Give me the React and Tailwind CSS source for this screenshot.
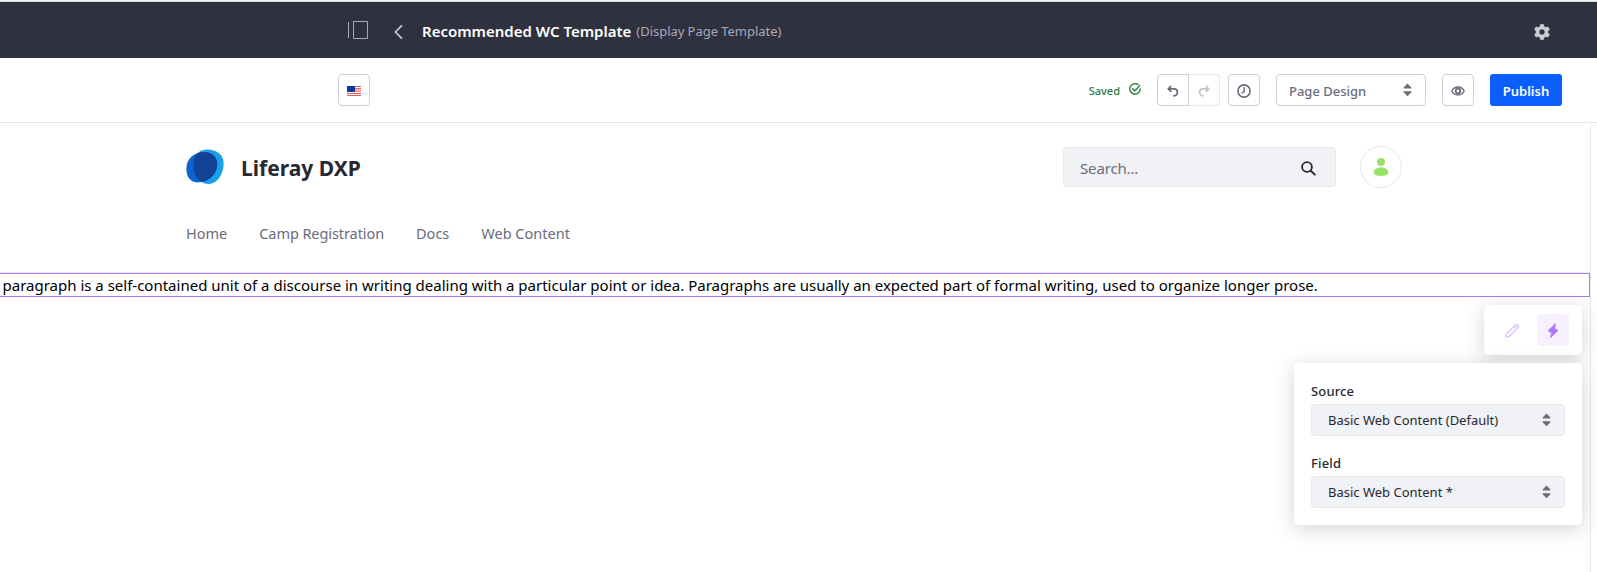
function Carets() {
  return (
    <svg width="9" height="14" viewBox="0 0 9 14" fill="#6b6c7e" className="shrink-0">
      <path d="M4.5.6 8.3 4.6Q8.7 5.6 7.8 5.6H1.2Q.3 5.6.7 4.6Z" />
      <path d="M4.5 13.2 8.3 9.2Q8.7 8.2 7.8 8.2H1.2Q.3 8.2.7 9.2Z" />
    </svg>
  );
}

function UndoIcon({ flip }) {
  return (
    <svg width="12" height="12" viewBox="0 0 12 12" fill="none" className={flip ? "mt-px -scale-x-100" : "mt-px"}>
      <path d="M1.6 3.8H7.2C11.6 4 11.6 10.2 6.9 10.8" stroke="currentColor" strokeWidth="1.7" strokeLinecap="round" />
      <path d="M3.8 1.4 1.3 3.8 3.8 6.3" stroke="currentColor" strokeWidth="1.7" strokeLinecap="round" strokeLinejoin="round" />
    </svg>
  );
}

function Logo() {
  const front =
    "M20.5.4C30.5.1 37.6 5.6 37.6 14.2C37.6 25 31.5 35 22 35C13 34.5 7.3 26 7.3 16C7.3 7 12 .8 20.5.4Z";
  const back =
    "M18.5 3C26 3 31.2 8 31.2 15C31.2 25 22.5 33.4 11.2 33.4C4 33.4.4 27.6.4 19.6C.4 9.8 8 3 18.5 3Z";
  return (
    <svg width="38" height="36" viewBox="0 0 38 36">
      <clipPath id="logo-front">
        <path d={front} />
      </clipPath>
      <path d={front} fill="#1a9fe9" />
      <path d={back} fill="#0b63ce" />
      <path d={back} fill="#134194" clipPath="url(#logo-front)" />
    </svg>
  );
}

function Flag() {
  return (
    <svg width="14" height="10" viewBox="0 0 14 10" shapeRendering="crispEdges">
      <rect width="14" height="10" fill="#fff" />
      <rect width="14" height="1" fill="#e4595c" />
      <rect y="2" width="14" height="1" fill="#e4696c" />
      <rect x="8" y="3" width="6" height="2" fill="#f3b3b5" />
      <rect y="5" width="14" height="1" fill="#eb8a8c" />
      <rect y="7" width="14" height="1" fill="#e4595c" />
      <rect y="9" width="14" height="1" fill="#e4595c" />
      <rect width="8" height="6" fill="#0b3a9e" />
    </svg>
  );
}

function Field({ label, value }) {
  return (
    <div className="flex flex-col gap-[3px]">
      <span className="h-[21px] pt-px text-[13px] leading-[21px] font-medium tracking-[0.15px] text-[#272833]">{label}</span>
      <div className="flex h-8 items-center justify-between rounded border border-[#e7e7ed] bg-[#f1f2f5] pr-[13px] pl-4 text-[13px] text-[#272833]">
        <span className="pt-[2px]">{value}</span>
        <Carets />
      </div>
    </div>
  );
}

const iconButton = "flex h-8 items-center justify-center rounded border border-[#cdced9] text-[#6b6c7e]";

export default function App() {
  return (
    <div className="flex h-[572px] w-[1597px] flex-col overflow-hidden bg-white font-['Noto_Sans',sans-serif]">
      <header className="flex h-[58px] shrink-0 items-center border-t border-[#f4f5f7] bg-[#30313f] shadow-[inset_0_1px_0_#d5d7db] pl-[348px]">
        <svg width="20" height="18" viewBox="0 0 20 18" fill="none" stroke="#a7a9bc" className="mt-px">
          <path d="M.5 1V17M5.5.5H19.5V17.5H5.5Z" />
        </svg>
        <svg width="9" height="16" viewBox="0 0 9 16" fill="none" stroke="#cdced9" strokeWidth="1.6" className="mt-[5px] ml-[26px]">
          <path d="M8 1.4 1.4 8l6.6 6.6" />
        </svg>
        <h1 className="mt-[3px] ml-[19px] text-[15px] font-semibold whitespace-nowrap text-white">Recommended WC Template</h1>
        <span className="mt-[4px] ml-[5px] text-[13px] tracking-[-0.04px] whitespace-nowrap text-[#a7a9bc]">(Display Page Template)</span>
        <svg width="16" height="16" viewBox="0 0 16 16" className="mt-[5px] mr-[47px] ml-auto" fill="#cdced9">
          <path
            fillRule="evenodd"
            stroke="#cdced9"
            strokeWidth=".6"
            strokeLinejoin="round"
            d="M6.5.4H9.5L10.1 2.7 11.6 3.6 14 2.9 15.5 5.4 13.8 7.1V8.9L15.5 10.6 14 13.1 11.6 12.4 10.1 13.3 9.5 15.6H6.5L5.9 13.3 4.4 12.4 2 13.1.5 10.6 2.2 8.9V7.1L.5 5.4 2 2.9 4.4 3.6 5.9 2.7ZM8 5A3 3 0 1 0 8 11A3 3 0 1 0 8 5Z"
          />
        </svg>
      </header>

      <div className="flex h-[65px] shrink-0 items-center border-b border-[#e7e7ed] pr-[35px] pl-[338px]">
        <button className={`${iconButton} w-8 pt-[2px]`}>
          <Flag />
        </button>
        <span className="mt-[2px] ml-auto text-[11px] font-medium text-[#287d3c]">Saved</span>
        <svg width="12" height="12" viewBox="0 0 12 12" fill="none" stroke="#287d3c" strokeWidth="1.4" strokeLinecap="round" strokeLinejoin="round" className="mb-[3px] ml-[9px]">
          <path d="M9 1.6A5.2 5.2 0 1 0 11.2 6" />
          <path d="M3.6 5.8 5.7 8 10.6 2.6" />
        </svg>
        <div className="ml-[16px] flex">
          <button className="flex h-8 w-8 items-center justify-center rounded-l border border-[#cdced9] text-[#6b6c7e]">
            <UndoIcon />
          </button>
          <button className="flex h-8 w-[31px] items-center justify-center rounded-r border border-l-0 border-[#e9e9ef] text-[#c4c4cb]">
            <UndoIcon flip />
          </button>
        </div>
        <button className={`${iconButton} ml-[8px] w-8`}>
          <svg width="14" height="14" viewBox="0 0 14 14" fill="none" stroke="currentColor" className="mt-[2px]">
            <circle cx="7" cy="7" r="6.1" strokeWidth="1.6" />
            <path d="M7.2 3.6V7.4L5.2 9" strokeWidth="1.5" strokeLinecap="round" />
          </svg>
        </button>
        <div className={`${iconButton} ml-[16px] w-[150px] !justify-between pr-[13px] pl-3 text-[13px] font-medium`}>
          <span className="pt-[3px]">Page Design</span>
          <Carets />
        </div>
        <button className={`${iconButton} ml-[16px] w-8`}>
          <svg width="14" height="10" viewBox="0 0 14 10" fill="none" stroke="currentColor" className="mt-[2px]">
            <path d="M.8 5C3.6-.3 10.4-.3 13.2 5C10.4 10.3 3.6 10.3.8 5Z" strokeWidth="1.4" />
            <circle cx="7" cy="5" r="2.3" strokeWidth="1.8" />
          </svg>
        </button>
        <button className="ml-4 h-8 w-[72px] rounded-[3px] bg-[#0b5fff] pt-[3px] text-[13px] font-semibold text-white">Publish</button>
      </div>

      <main className="flex w-[1591px] grow flex-col border-r border-[#e7e7ed]">
        <div className="flex h-[88px] items-center pl-[186px]">
          <Logo />
          <span className="mt-[4px] ml-[17px] text-[21px] font-bold text-[#272833]">Liferay DXP</span>
          <div className="ml-auto flex h-10 w-[273px] items-center justify-between rounded border border-[#e7e7ed] bg-[#f1f2f5] pr-[19px] pl-[16px]">
            <span className="pt-[2px] text-[15px] tracking-[-0.15px] text-[#6b6c7e]">Search...</span>
            <svg width="15" height="15" viewBox="0 0 15 15" fill="none" stroke="#272833" strokeLinecap="round" className="mt-[2px]">
              <circle cx="6" cy="6" r="4.9" strokeWidth="1.8" />
              <path d="M9.8 9.8 13.8 13.6" strokeWidth="2" />
            </svg>
          </div>
          <div className="mr-[188px] ml-[24px] flex size-[42px] items-center justify-center rounded-full border border-[#e7e7ed]">
            <svg width="16" height="18" viewBox="0 0 16 18" fill="#9be169">
              <circle cx="8" cy="4.1" r="4" />
              <path d="M8 9.2C12.4 9.2 15.4 12 15.4 14.6C15.4 17 12 18 8 18C4 18 .6 17 .6 14.6C.6 12 3.6 9.2 8 9.2Z" />
            </svg>
          </div>
        </div>
        <nav className="flex h-[62px] items-center gap-[32px] border-b border-[#ebebef] pb-[15px] pl-[186px] text-[14.5px] text-[#6b6c7e]">
          <span>Home</span>
          <span className="tracking-[-0.08px]">Camp Registration</span>
          <span>Docs</span>
          <span>Web Content</span>
        </nav>
        <p className="flex h-6 items-center border-y border-r border-[#af78ff] pl-[2.5px] text-[15px] whitespace-nowrap text-black">
          paragraph is a self-contained unit of a discourse in writing dealing with a particular point or idea. Paragraphs are usually an expected part of formal writing, used to organize longer prose.
        </p>
        <div className="flex flex-col items-end gap-2 pt-2 pr-2">
          <div className="flex h-[50px] w-[98px] items-center justify-end gap-[17px] rounded bg-white pr-[13px] shadow-[0_4px_20px_rgba(39,40,51,0.2)]">
            <svg width="15" height="15" viewBox="0 0 15 15" fill="none" stroke="#dfc9ff" strokeWidth="1.6" strokeLinejoin="round" className="mt-px">
              <path d="M1 14 1.4 11 10.6 1.8C12.1.4 14.6 2.8 13.2 4.4L4 13.6ZM9.6 3.2 11.8 5.4" />
            </svg>
            <div className="flex size-8 items-center justify-center rounded bg-[#f7f0ff]">
              <svg width="10" height="15" viewBox="0 0 10 15" fill="#af78ff">
                <path d="M7 .6C7.6.2 8.2.6 8 1.3L6.8 5.2 9.4 6.6C10 7 10 7.7 9.6 8.2L3.2 14.5C2.6 15 1.9 14.6 2.1 13.9L3.3 9.9.6 8.4C0 8 0 7.3.4 6.9Z" />
              </svg>
            </div>
          </div>
          <div className="flex h-[162px] w-[288px] flex-col gap-4 rounded bg-white pt-[17px] pr-[17px] pl-[17px] shadow-[0_4px_20px_rgba(39,40,51,0.2)]">
            <Field label="Source" value="Basic Web Content (Default)" />
            <Field label="Field" value="Basic Web Content *" />
          </div>
        </div>
      </main>
    </div>
  );
}
